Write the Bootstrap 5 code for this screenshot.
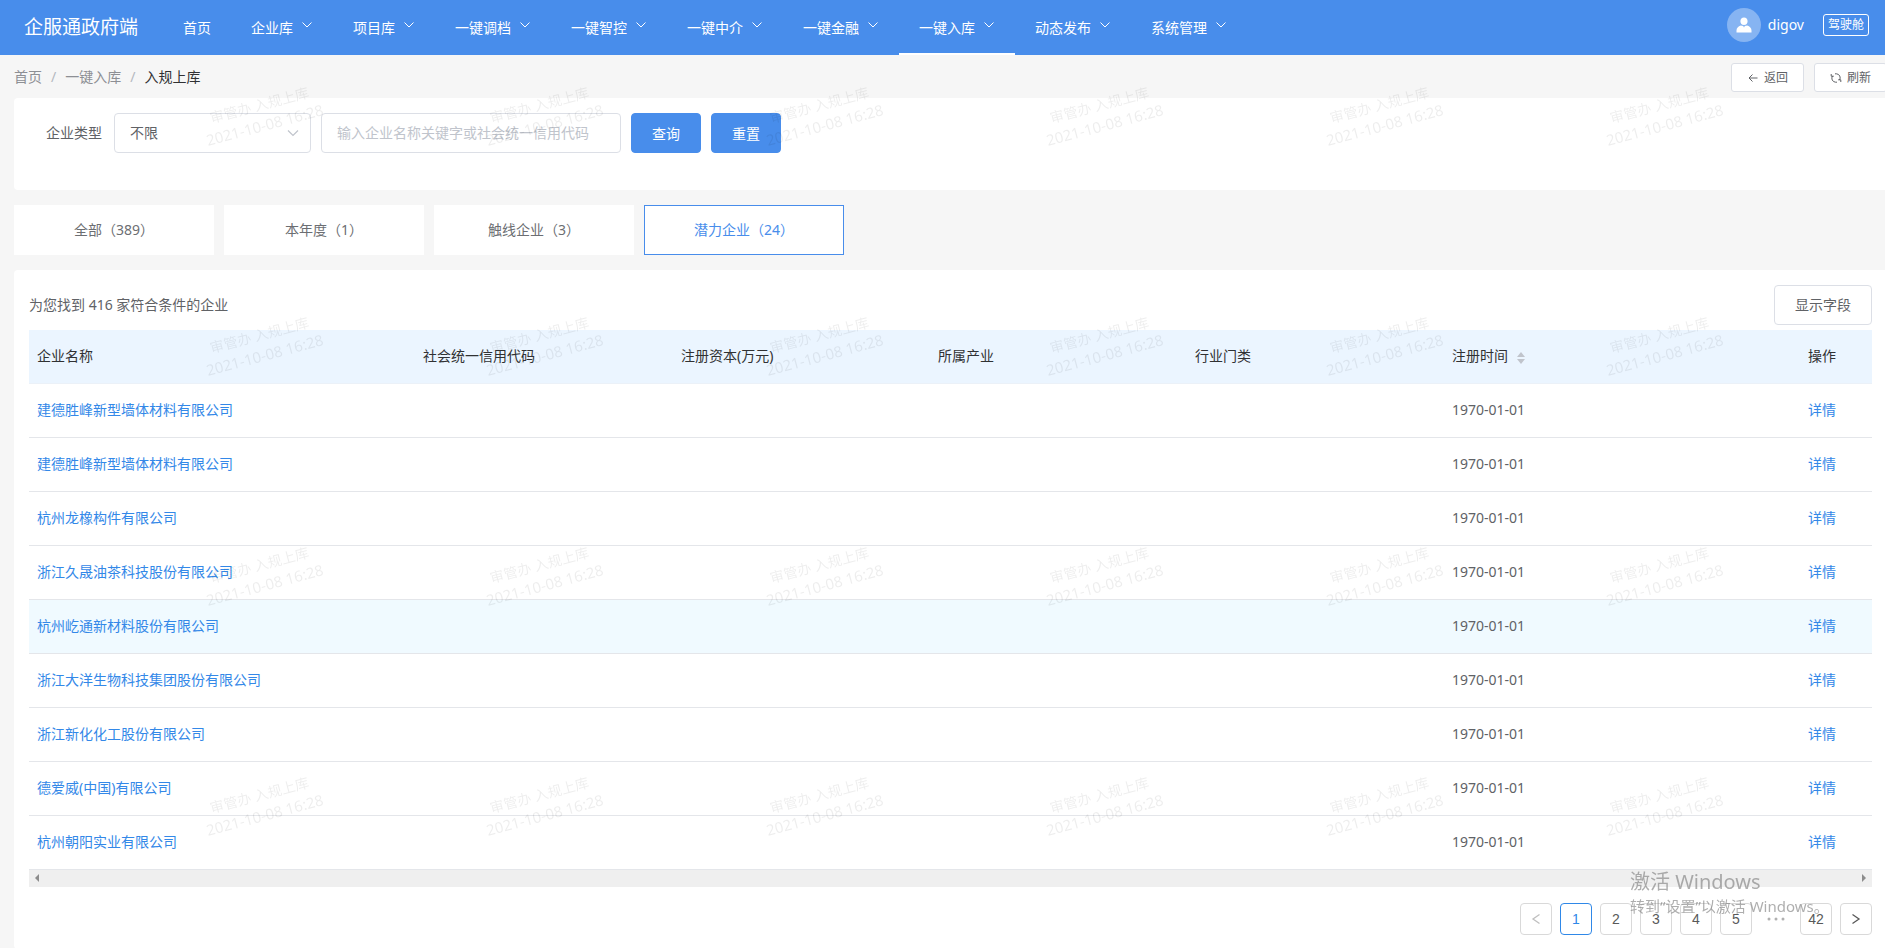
<!DOCTYPE html>
<html lang="zh-CN">
<head>
<meta charset="utf-8">
<meta name="viewport" content="width=device-width, initial-scale=1">
<title>企服通政府端</title>
<link href="https://cdn.jsdelivr.net/npm/bootstrap@5.3.0/dist/css/bootstrap.min.css" rel="stylesheet">
<style>
:root { --brand: #488deb; --line: #dcdfe6; --ink: #606266; --link: #3388e8; }
body {
  font-family: "Noto Sans", "Noto Sans CJK SC", sans-serif;
  font-size: 14px; line-height: 20px; color: var(--ink);
  background: #f6f6f6; overflow-x: hidden; min-height: 100vh;
}
a { text-decoration: none; }
/* top bar */
.topbar { background: var(--brand); height: 55px; padding: 0 16px 0 24px; }
.topbar .navbar-brand { font-size: 19px; line-height: 28px; color: #fff; margin: 0 25px 0 0; padding: 0 0 2px; }
.topbar .nav-link { color: #fff; padding: 2px 20px 0; height: 55px; border-bottom: 2px solid transparent; gap: 8px; white-space: nowrap; }
.topbar .nav-link.active { border-bottom-color: #fff; }
.topbar .nav-link svg { margin-bottom: 6px; }
.account { padding-bottom: 5px; gap: 7px; color: #fff; }
.avatar { width: 34px; height: 34px; background: #86b4f2; }
.cockpit { border: 1px solid #fff; border-radius: 3px; font-size: 12px; line-height: 18px; padding: 1px 4px; color: #fff; background: none; margin-left: 12px; }
/* page body */
.page { padding-left: 14px; margin-right: -2px; }
.crumbs { height: 43px; }
.breadcrumb { --bs-breadcrumb-divider-color: #b4b8c0; --bs-breadcrumb-item-padding-x: 9px; }
.breadcrumb a { color: #8d8f94; }
.breadcrumb .active { color: #303133; }
.page-actions { gap: 10px; }
.btn-plain { background: #fff; border: 1px solid var(--line); color: var(--ink); border-radius: 4px; font-size: 14px; line-height: 20px; padding: 9px 20px; }
.btn-mini { border-radius: 3px; font-size: 12px; line-height: 18px; padding: 5px 15px 4px; gap: 5px; width: 73px; height: 29px; }
.panel { background: #fff; border-radius: 4px 0 0 4px; }
.filter { padding: 15px 15px 37px 32px; gap: 10px; }
.filter label { margin-right: 2px; }
.filter .form-select, .filter .form-control { height: 40px; font-size: 14px; line-height: 20px; border-color: var(--line); border-radius: 4px; color: var(--ink); padding: 0 15px 1px; }
.filter .form-select {
  width: 197px; background-size: 14px 14px; background-position: right 10px center;
  background-image: url("data:image/svg+xml,%3csvg xmlns='http://www.w3.org/2000/svg' viewBox='0 0 14 14'%3e%3cpath d='M2 4.5l5 5 5-5' fill='none' stroke='%23c0c4cc' stroke-width='1.2'/%3e%3c/svg%3e");
}
.filter .form-control { width: 300px; }
.filter .form-control::placeholder { color: #c0c4cc; }
.filter .btn-primary { background: var(--brand); border-color: var(--brand); border-radius: 4px; width: 70px; height: 40px; font-size: 14px; padding: 0; }
.tabs { margin: 15px 0; gap: 10px; }
.tabs button { width: 200px; height: 50px; border: 1px solid #fff; background: #fff; color: #6c6e72; }
.tabs button.active { border-color: var(--brand); color: var(--brand); }
/* result list */
.results { padding: 15px 15px 14px; }
.firms { table-layout: fixed; margin: 5px 0 0; --bs-table-bg: transparent; color: var(--ink); }
.firms th, .firms td { padding: 16px 8px; height: 54px; border-bottom: 1px solid #e4e6ea; font-weight: 400; line-height: 20px; white-space: nowrap; vertical-align: middle; }
.firms th { background: #ebf5ff; color: #303133; height: 53px; border-bottom-color: #ebf1f8; }
.firms td a { color: var(--link); }
.firms tr.on td { background: #f0faff; }
.firms > :not(caption) > * > * { box-shadow: none; }
.c-name { width: 386px; } .c-code { width: 258px; } .c-mid { width: 257px; } .c-act { width: 72px; }
.hbar { height: 17px; background: #efefef; padding: 0 5px; }
.pages { margin-top: 16px; --bs-pagination-font-size: 14px; gap: 8px; }
.pages .page-item .page-link { width: 32px; height: 32px; padding: 0; border: 1px solid #d9d9d9; border-radius: 4px; color: #595959; font-family: "Liberation Sans", sans-serif; font-size: 14px; margin: 0; }
.pages .page-item.active .page-link { background: #fff; border-color: #2f88e8; color: #2f88e8; }
.pages .page-item.disabled .page-link { color: #bfbfbf; background: #fff; }
.pages .gap-dots { width: 32px; color: #b0b0b0; }
/* overlays */
.stamps { position: fixed; inset: 0; z-index: 20; pointer-events: none; overflow: hidden; padding-left: 122px; display: grid; grid-template-columns: repeat(6, 280px); grid-auto-rows: 230px; color: rgba(0,0,0,.07); }
.stamps div { display: flex; flex-direction: column; justify-content: center; align-items: center; transform: rotate(-15deg); font-size: 14px; line-height: 20px; }
.stamps .stamp-time { font-size: 15px; }
.activate { position: fixed; right: 55px; bottom: 32px; width: 200px; z-index: 30; pointer-events: none; color: rgba(120,120,120,.6); font-size: 15px; line-height: 20px; white-space: nowrap; }
.activate strong { display: block; font-weight: 400; font-size: 20px; line-height: 28px; }
</style>
</head>
<body>
<header class="topbar d-flex align-items-center">
  <a class="navbar-brand" href="#">企服通政府端</a>
  <nav class="nav flex-nowrap me-auto" id="menu" aria-label="主菜单"></nav>
  <div class="account d-flex align-items-center">
    <span class="avatar rounded-circle d-flex align-items-center justify-content-center">
      <svg width="16" height="16" viewBox="0 0 16 16" fill="#fff"><path d="M8 .5c2.200 0 3.600 1.600 3.600 3.700C11.600 6.300 10.300 8 8 8S4.400 6.300 4.400 4.200C4.400 2.100 5.800.5 8 .5zM4.800 8.500 7.200 9 8 10.500 8.800 9l2.400-.5c2.600.8 4.300 2.700 4.300 5v2H.5v-2c0-2.300 1.700-4.200 4.300-5z"/></svg>
    </span>
    <span>digov</span>
    <button class="cockpit" type="button">驾驶舱</button>
  </div>
</header>

<main class="page">
  <div class="crumbs d-flex align-items-start justify-content-between">
    <nav aria-label="breadcrumb">
      <ol class="breadcrumb mb-0 pt-2 mt-1">
        <li class="breadcrumb-item"><a href="#">首页</a></li>
        <li class="breadcrumb-item"><a href="#">一键入库</a></li>
        <li class="breadcrumb-item active" aria-current="page">入规上库</li>
      </ol>
    </nav>
    <div class="page-actions d-flex pt-2">
      <button class="btn btn-plain btn-mini d-flex align-items-center justify-content-center" type="button"><svg width="12" height="12" viewBox="0 0 12 12" fill="none" stroke="#606266"><path d="M10.500 6H2M5.500 2.500 2 6l3.500 3.500"/></svg>返回</button>
      <button class="btn btn-plain btn-mini d-flex align-items-center justify-content-center" type="button"><svg width="12" height="12" viewBox="0 0 12 12" fill="none" stroke="#606266"><path d="M5 1.800h1.500a4 4 0 0 1 3 6.200M7 10.200H5.500a4 4 0 0 1-3-6.200M1.200 2v2.200h2.600M10.800 10V7.800H8.200"/></svg>刷新</button>
    </div>
  </div>

  <form class="panel filter d-flex align-items-center">
    <label for="kind">企业类型</label>
    <select class="form-select" id="kind"><option>不限</option></select>
    <input class="form-control" type="text" aria-label="关键字" placeholder="输入企业名称关键字或社会统一信用代码">
    <button class="btn btn-primary" type="button">查询</button>
    <button class="btn btn-primary" type="reset">重置</button>
  </form>

  <div class="tabs d-flex">
    <button type="button">全部（389）</button>
    <button type="button">本年度（1）</button>
    <button type="button">触线企业（3）</button>
    <button type="button" class="active">潜力企业（24）</button>
  </div>

  <section class="panel results">
    <div class="d-flex align-items-center justify-content-between">
      <span>为您找到 416 家符合条件的企业</span>
      <button class="btn btn-plain" type="button">显示字段</button>
    </div>
    <table class="table firms">
      <colgroup><col class="c-name"><col class="c-code"><col class="c-mid"><col class="c-mid"><col class="c-mid"><col><col class="c-act"></colgroup>
      <thead><tr>
        <th>企业名称</th><th>社会统一信用代码</th><th>注册资本(万元)</th><th>所属产业</th><th>行业门类</th>
        <th>注册时间 <svg class="ms-1" width="10" height="12" viewBox="0 0 10 12" fill="#c0c4cc"><path d="M1 5 5 0l4 5zM1 7l4 5 4-5z"/></svg></th>
        <th>操作</th>
      </tr></thead>
      <tbody id="rows"></tbody>
    </table>
    <div class="hbar d-flex align-items-center justify-content-between">
      <svg width="5" height="8" viewBox="0 0 5 8" fill="#8c8c8c"><path d="M5 0v8L1 4z"/></svg>
      <svg width="5" height="8" viewBox="0 0 5 8" fill="#8c8c8c"><path d="M0 0v8l4-4z"/></svg>
    </div>
    <ul class="pagination pages justify-content-end mb-0" id="pager"></ul>
  </section>
</main>

<div class="stamps" id="stamps" aria-hidden="true"></div>
<div class="activate"><strong>激活 Windows</strong>转到“设置”以激活 Windows。</div>

<script>
const caret = '<svg width="12" height="12" viewBox="0 0 12 12" fill="none" stroke="#fff"><path d="M1.500 3.500 6 8l4.500-4.500"/></svg>';
const items = ['首页', '企业库', '项目库', '一键调档', '一键智控', '一键中介', '一键金融', '一键入库', '动态发布', '系统管理'];
document.getElementById('menu').innerHTML = items.map((t, i) =>
  `<a class="nav-link d-flex align-items-center${t === '一键入库' ? ' active' : ''}" href="#">${t}${i ? caret : ''}</a>`).join('');

const firms = ['建德胜峰新型墙体材料有限公司', '建德胜峰新型墙体材料有限公司', '杭州龙橡构件有限公司', '浙江久晟油茶科技股份有限公司',
  '杭州屹通新材料股份有限公司', '浙江大洋生物科技集团股份有限公司', '浙江新化化工股份有限公司', '德爱威(中国)有限公司', '杭州朝阳实业有限公司'];
document.getElementById('rows').innerHTML = firms.map((n, i) =>
  `<tr${i === 4 ? ' class="on"' : ''}><td><a href="#">${n}</a></td><td></td><td></td><td></td><td></td><td>1970-01-01</td><td><a href="#">详情</a></td></tr>`).join('');

const arrow = d => `<svg width="12" height="12" viewBox="0 0 12 12" fill="none" stroke="currentColor" stroke-width="1.300"><path d="${d}"/></svg>`;
const link = (c, extra, label) => `<li class="page-item ${extra}"><a class="page-link d-flex align-items-center justify-content-center" href="#" aria-label="${label}">${c}</a></li>`;
document.getElementById('pager').innerHTML =
  link(arrow('M9.500 1.500 3 6l6.500 4.500'), 'disabled', '上一页') +
  [1, 2, 3, 4, 5].map(n => link(n, n === 1 ? 'active' : '', n)).join('') +
  '<li class="gap-dots d-flex align-items-center justify-content-center"><svg width="18" height="4" viewBox="0 0 18 4" fill="currentColor"><circle cx="2" cy="2" r="1.500"/><circle cx="9" cy="2" r="1.500"/><circle cx="16" cy="2" r="1.500"/></svg></li>' +
  link(42, '', 42) + link(arrow('M2.500 1.500 9 6l-6.500 4.500'), '', '下一页');

document.getElementById('stamps').innerHTML = '<div><span>审管办 入规上库</span><span class="stamp-time">2021-10-08 16:28</span></div>'.repeat(24);
</script>
<script src="https://cdn.jsdelivr.net/npm/bootstrap@5.3.0/dist/js/bootstrap.bundle.min.js"></script>
</body>
</html>
